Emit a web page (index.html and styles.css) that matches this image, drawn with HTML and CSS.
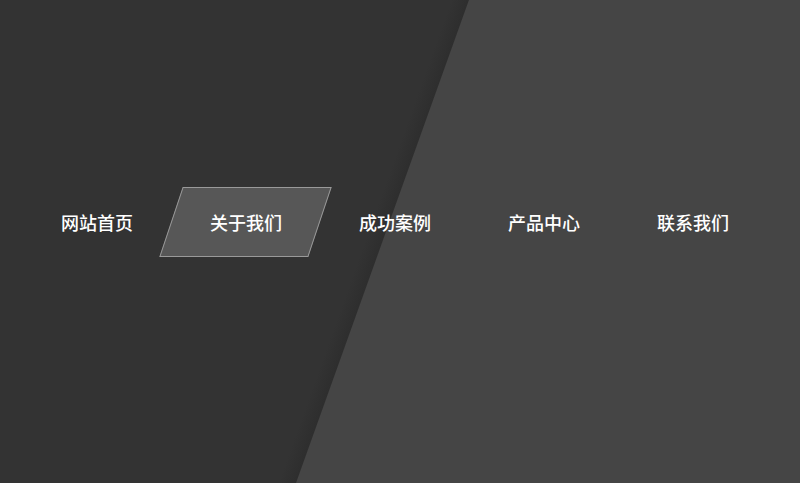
FILE: index.html
```html
<!DOCTYPE html>
<html lang="zh-CN">
<head>
<meta charset="utf-8">
<title>导航</title>
<link rel="stylesheet" href="styles.css">
</head>
<body>
<nav class="nav">
  <ul class="menu">
    <li class="item"><a class="link" href="#"><span class="label">网站首页</span></a></li>
    <li class="item"><a class="link active" href="#"><span class="label">关于我们</span></a></li>
    <li class="item"><a class="link" href="#"><span class="label">成功案例</span></a></li>
    <li class="item"><a class="link" href="#"><span class="label">产品中心</span></a></li>
    <li class="item"><a class="link" href="#"><span class="label">联系我们</span></a></li>
  </ul>
</nav>
</body>
</html>
```
FILE: styles.css
```css
html, body {
  margin: 0;
  height: 100%;
}
body {
  overflow: hidden;
  font-family: "Noto Sans CJK SC", "Noto Sans", sans-serif;
  background: linear-gradient(109.7deg, #333333 0px, #333333 425px, #2e2e2e 441px, #454545 442px, #454545 100%);
}
.nav {
  padding-top: 187px;
}
.menu {
  list-style: none;
  margin: 0;
  padding: 0 0 0 22px;
  display: flex;
}
.item {
  width: 149px;
}
.link {
  display: flex;
  align-items: center;
  justify-content: center;
  height: 70px;
  box-sizing: border-box;
  color: #fff;
  text-decoration: none;
  font-size: 18px;
  font-weight: 500;
  border: 1px solid transparent;
  transform: skewX(-18.5deg);
}
.label {
  display: block;
  transform: skewX(18.5deg);
  margin-top: -1px;
}
.active {
  background: #575757;
  border-color: #9a9a9a;
}
```
